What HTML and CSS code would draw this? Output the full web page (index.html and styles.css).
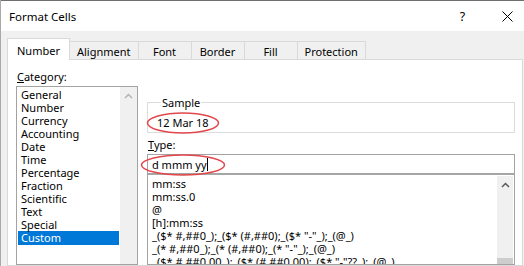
FILE: index.html
```html
<!DOCTYPE html>
<html>
<head>
<meta charset="utf-8">
<link rel="stylesheet" href="styles.css">
</head>
<body>
<div class="window">
  <div class="titlebar">
    <span class="title">Format Cells</span>
    <span class="tb-btn help">?</span>
    <span class="tb-btn close">
      <svg width="11" height="11" viewBox="0 0 11 11"><path d="M0.5 0.5 L10.5 10.5 M10.5 0.5 L0.5 10.5" stroke="#000" stroke-width="1" fill="none"/></svg>
    </span>
  </div>
  <div class="content">
    <div class="tabs">
      <div class="tab active">Number</div>
      <div class="tab">Alignment</div>
      <div class="tab">Font</div>
      <div class="tab">Border</div>
      <div class="tab">Fill</div>
      <div class="tab">Protection</div>
    </div>
    <div class="panel">
      <div class="cat-col">
        <div class="label"><u>C</u>ategory:</div>
        <div class="listbox cat-list">
          <ul class="items">
            <li>General</li>
            <li>Number</li>
            <li>Currency</li>
            <li>Accounting</li>
            <li>Date</li>
            <li>Time</li>
            <li>Percentage</li>
            <li>Fraction</li>
            <li>Scientific</li>
            <li>Text</li>
            <li>Special</li>
            <li class="selected">Custom</li>
          </ul>
          <div class="scrollbar">
            <svg class="chev" width="9" height="6" viewBox="0 0 9 6"><path d="M1 5 L4.5 1.5 L8 5" stroke="#b4b4b4" stroke-width="1.5" fill="none"/></svg>
          </div>
        </div>
      </div>
      <div class="main-col">
        <fieldset class="sample">
          <legend>Sample</legend>
          <div class="sample-value"><span class="marked">12 Mar 18<svg class="ring ring-sample" width="74" height="22" viewBox="0 0 74 22"><ellipse cx="37" cy="11" rx="35.5" ry="10" fill="none" stroke="#e2474c" stroke-width="1.5"/></svg></span></div>
        </fieldset>
        <div class="label type-label"><u>T</u>ype:</div>
        <div class="type-input"><span class="marked">d mmm yy<svg class="ring ring-type" width="86" height="22" viewBox="0 0 86 22"><ellipse cx="43" cy="11" rx="41.5" ry="10" fill="none" stroke="#e2474c" stroke-width="1.5"/></svg></span><span class="caret"></span></div>
        <div class="listbox fmt-list">
          <ul class="items">
            <li>mm:ss</li>
            <li>mm:ss.0</li>
            <li>@</li>
            <li>[h]:mm:ss</li>
            <li>_($* #,##0_);_($* (#,##0);_($* "-"_);_(@_)</li>
            <li>_(* #,##0_);_(* (#,##0);_(* "-"_);_(@_)</li>
            <li>_($* #,##0.00_);_($* (#,##0.00);_($* "-"??_);_(@_)</li>
            <li>_(* #,##0.00_);_(* (#,##0.00);_(* "-"??_);_(@_)</li>
          </ul>
          <div class="scrollbar">
            <svg class="chev" width="9" height="6" viewBox="0 0 9 6"><path d="M1 5 L4.5 1.5 L8 5" stroke="#5a5a5a" stroke-width="1.5" fill="none"/></svg>
            <div class="thumb"></div>
          </div>
        </div>
      </div>
    </div>
  </div>
</div>
</body>
</html>
```

FILE: styles.css
```css
* { box-sizing: border-box; }
html, body { margin: 0; padding: 0; }
body {
  width: 524px;
  height: 266px;
  overflow: hidden;
  background: #f0f0f0;
  font-family: "Noto Sans", "Segoe UI", sans-serif;
  font-size: 11px;
  line-height: 13px;
  color: #000;
}
.window {
  width: 530px;
  height: 266px;
  border-left: 1px solid #a9a9a9;
  display: flex;
  flex-direction: column;
}
.titlebar {
  flex: none;
  height: 31px;
  background: #fff;
  border-top: 1px solid #6e6e6e;
  display: flex;
  align-items: center;
  padding-left: 8px;
}
.title { flex: 1; font-size: 11.5px; }
.tb-btn {
  width: 45px;
  height: 30px;
  display: flex;
  align-items: center;
  justify-content: center;
}
.help { font-size: 12.5px; }
.content {
  flex: 1;
  display: flex;
  flex-direction: column;
  padding: 7px 7px 0 6px;
  min-height: 0;
}
.tabs {
  flex: none;
  height: 21px;
  display: flex;
  align-items: flex-end;
}
.tab {
  height: 18px;
  min-width: 54px;
  padding: 1px 7px 0;
  margin-left: -1px;
  border: 1px solid #d9d9d9;
  border-bottom: 0;
  background: #f0f0f0;
  display: flex;
  align-items: center;
  justify-content: center;
  white-space: nowrap;
}
.tab.active {
  margin-left: 0;
  height: 22px;
  margin-bottom: -1px;
  padding: 2px 9px 0;
  background: #fff;
  position: relative;
  z-index: 1;
}
.panel {
  flex: 1;
  background: #fff;
  border: 1px solid #d9d9d9;
  display: flex;
  padding: 10px 0 0 8px;
  min-height: 0;
}
.label { padding-left: 1px; }
.cat-col {
  width: 122px;
  display: flex;
  flex-direction: column;
}
.cat-col .label { margin-bottom: 3px; }
.listbox {
  flex: 1;
  display: flex;
  border: 1px solid #a3a3a3;
  background: #fff;
  min-height: 0;
}
.items {
  list-style: none;
  margin: 0;
  padding: 0;
  flex: 1;
  white-space: nowrap;
  overflow: hidden;
}
.items li { padding-left: 3px; height: 13px; }
.cat-list .items { margin: 1px 1px 0; }
.cat-list .items li.selected { background: #0078d7; color: #fff; height: 14px; }
.scrollbar {
  background: #f0f0f0;
  display: flex;
  flex-direction: column;
  align-items: center;
}
.cat-list .scrollbar { width: 17px; padding-top: 6px; }
.fmt-list .scrollbar { width: 16px; margin: 1px 1px 0 0; padding-top: 6px; }
.chev { display: block; }
.thumb {
  margin-top: auto;
  width: 100%;
  height: 6px;
  background: #cdcdcd;
}
.main-col {
  width: 368px;
  margin-left: 9px;
  padding-top: 26px;
  display: flex;
  flex-direction: column;
}
.sample {
  margin: 0;
  padding: 7px 0 3px 9px;
  border: 1px solid #dcdcdc;
  min-width: 0;
}
.sample legend {
  margin-left: 4px;
  padding: 0 1px;
}
.marked { position: relative; display: inline-block; }
.ring { position: absolute; pointer-events: none; }
.ring-sample { left: -11px; top: -4px; }
.ring-type { left: -12px; top: -4px; }
.type-label { margin-top: 5px; margin-bottom: 3px; }
.type-input {
  flex: none;
  height: 20px;
  border: 1px solid #a3a3a3;
  padding: 0 4px;
  display: flex;
  align-items: center;
}
.caret {
  width: 1px;
  height: 13px;
  background: #000;
}
.fmt-list { border-top-color: #a8a8a8; }
.fmt-list .items { padding: 2px 0 0 1px; }
```
